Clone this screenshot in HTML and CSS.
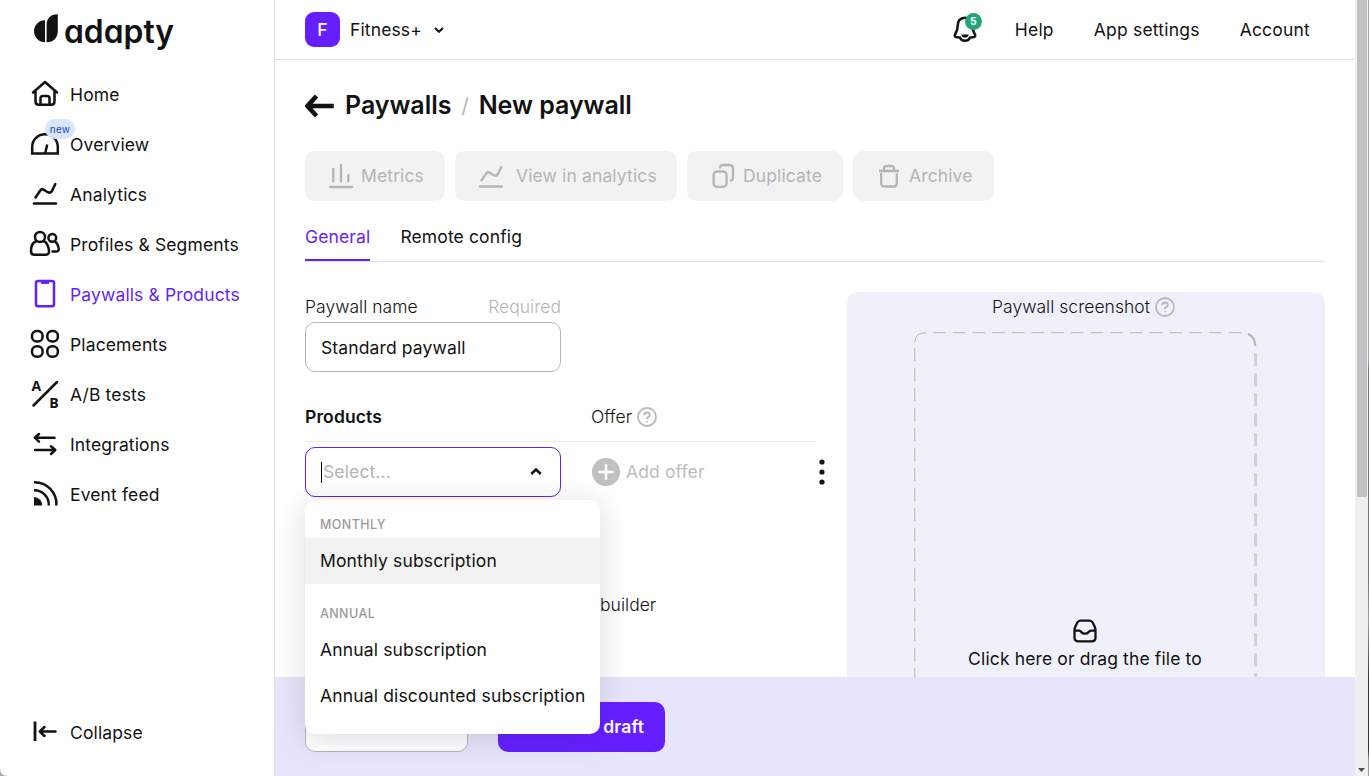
FILE: index.html
```html
<!DOCTYPE html>
<html lang="en">
<head>
<meta charset="utf-8">
<title>New paywall</title>
<link rel="stylesheet" href="styles.css">
</head>
<body>
<div class="app">
  <aside class="sidebar">
    <div class="logo">
      <svg width="146" height="44" viewBox="0 0 146 44">
        <path d="M12 6.2V28.2A11 11 0 0 1 12 6.2Z M13.6 11.5C13.6 4.5 17 .5 24.8 .3V16.5C24.8 24 20.6 28.2 13.6 28.2Z" fill="#121212"/>
        <text class="wordmark" x="31" y="28.7" textLength="110" lengthAdjust="spacingAndGlyphs">adapty</text>
      </svg>
    </div>
    <nav class="nav">
      <a class="nav-item"><svg class="ico" viewBox="0 0 30 30"><path d="M3 13.5 15 3 27 13.5M5.5 12V22.5Q5.5 25.8 8.8 25.8H21.2Q24.5 25.8 24.5 22.5V12M10.5 25.5V19.5Q10.5 17 13 17H17Q19.5 17 19.5 19.5V25.5"/></svg>Home</a>
      <a class="nav-item"><svg class="ico" viewBox="0 0 30 30"><path stroke-linecap="butt" stroke-linejoin="miter" d="M2.2 24.5V18A12.8 12.8 0 0 1 27.8 18V24.5ZM15.3 24 17.2 15.5"/></svg>Overview<span class="new">new</span></a>
      <a class="nav-item"><svg class="ico" viewBox="0 0 30 30"><path d="M5.5 18.5 10.5 11.2Q11.7 9.5 13.5 10.6L17.8 13.2Q20.3 14.5 22 12L25.3 5M4 24.5H26"/></svg>Analytics</a>
      <a class="nav-item"><svg class="ico" viewBox="0 0 30 30"><circle cx="10" cy="8" r="5"/><path d="M6.5 12C3 13.2 1 17.5 1 22 1 25 2.5 25.7 4 25.7H16C18 25.7 19.2 24.5 19 22 18.5 17.5 17 13.2 13.5 12M22.5 22.6H26.5C28.5 22.6 29 21 28.6 19 28 15.5 27 14 25.5 13"/><circle cx="22.3" cy="8.8" r="3.9"/></svg>Profiles &amp; Segments</a>
      <a class="nav-item active"><svg class="ico" viewBox="0 0 30 30"><rect x="6" y="2" width="18" height="25.3" rx="2"/><path stroke-width="3" stroke-linecap="butt" d="M11 3.4H19"/></svg>Paywalls &amp; Products</a>
      <a class="nav-item"><svg class="ico" viewBox="0 0 30 30"><rect x="2" y="2" width="10.6" height="10.6" rx="4.8"/><rect x="17.3" y="2" width="10.6" height="10.6" rx="4.8"/><rect x="2" y="17.2" width="10.6" height="10.6" rx="4.8"/><rect x="17.3" y="17.2" width="10.6" height="10.6" rx="4.8"/></svg>Placements</a>
      <a class="nav-item"><svg class="ico" viewBox="0 0 30 30"><path d="M3.5 26.5 27 3"/><text class="ab" x="1.5" y="12">A</text><text class="ab" x="19.3" y="28.5">B</text></svg>A/B tests</a>
      <a class="nav-item"><svg class="ico" viewBox="0 0 30 30"><path d="M24.5 8.7H5M9 5 4.8 8.7 9 12.6M5 21H25M21 17.2 25.3 21 21 25"/></svg>Integrations</a>
      <a class="nav-item"><svg class="ico" viewBox="0 0 30 30"><path stroke-linecap="butt" d="M4 3.2A22 22 0 0 1 26.4 26.5M4 11.2A14.5 14.5 0 0 1 18.8 26.5"/><path d="M4 18A8.6 8.6 0 0 1 12.3 26.5H4Z" fill="currentColor" stroke="none"/></svg>Event feed</a>
    </nav>
    <a class="nav-item collapse"><svg class="ico" viewBox="0 0 30 30"><path stroke-linecap="butt" stroke-width="2.8" d="M5 4.5V24"/><path d="M25.5 14.5H10M14.5 10 9.7 14.5 14.5 19"/></svg>Collapse</a>
    <svg class="corner" width="8" height="8"><path d="M0 0Q0 8 8 8H0Z" fill="#aaa"/></svg>
  </aside>

  <main class="main">
    <header class="top">
      <span class="badge">F</span><span class="appname">Fitness+</span>
      <svg class="chev" width="10" height="6" viewBox="0 0 10 6"><path d="M1 1 5 4.8 9 1"/></svg>
      <div class="top-right">
        <span class="bell">
          <svg width="24" height="28" viewBox="0 0 24 28"><path d="M12 1.8C7 1.8 4.8 5 4.8 9.2 4.8 13.5 3.8 15.2 2.2 18.2 1.2 20 1.7 21 3.7 21.2L7 21.6C8.5 25.8 15.5 25.8 17 21.6L20.3 21.2C22.3 21 22.8 20 21.8 18.2 20.2 15.2 19.2 13.5 19.2 9.2 19.2 5 17 1.8 12 1.8Z" fill="none" stroke="#121212" stroke-width="2.5"/><path d="M8.3 18.5H15.7Q15.5 21.6 12 21.6 8.5 21.6 8.3 18.5Z" fill="#121212"/></svg>
          <span class="count">5</span>
        </span>
        <a>Help</a><a>App settings</a><a>Account</a>
      </div>
    </header>

    <section class="content">
      <h1 class="title">
        <svg width="29" height="24" viewBox="0 0 29 24"><path d="M28.8 12H3M11.5 2 2.5 12 11.5 22" fill="none" stroke="#121212" stroke-width="4.6"/></svg>
        <span class="t1">Paywalls</span><span class="slash">/</span><span class="t2">New paywall</span>
      </h1>
      <div class="actions">
        <button class="act metrics"><svg width="24" height="26" viewBox="0 0 24 26"><path d="M1 24H23M4.3 6V18.5M12 2V18.5M19.3 12V18.5"/></svg>Metrics</button>
        <button class="act analytics"><svg width="26" height="26" viewBox="0 0 26 26"><path d="M3.5 17.5 8.5 10.2Q9.7 8.7 11.5 9.7L15.8 12.2Q18.3 13.5 20 11L23.3 4M2 23.5H24"/></svg>View in analytics</button>
        <button class="act duplicate"><svg width="24" height="26" viewBox="0 0 24 26"><rect x="2.6" y="8.5" width="13" height="15.3" rx="3.5"/><path d="M9 4.5Q9.5 2 12 2H18.5Q22 2 22 5.5V14Q22 17 19.8 17.5"/></svg>Duplicate</button>
        <button class="act archive"><svg width="20" height="26" viewBox="0 0 20 26"><path stroke-linecap="butt" d="M0 8H20M5 7.5V5.5Q5 3 7.5 3H12.5Q15 3 15 5.5V7.5"/><path d="M2.2 11V20.5Q2.2 23.5 5.2 23.5H14.8Q17.8 23.5 17.8 20.5V11"/></svg>Archive</button>
      </div>
      <div class="tabs"><a class="tab on">General</a><a class="tab">Remote config</a></div>

      <div class="cols">
        <div class="form">
          <div class="label-row"><span>Paywall name</span><span class="muted">Required</span></div>
          <div class="field name">Standard paywall</div>
          <div class="prod-head"><b>Products</b><span class="offer">Offer <svg class="q" width="20" height="20" viewBox="0 0 20 20"><circle cx="10" cy="10" r="9"/><path d="M7.2 8.2Q7.2 5.5 10 5.5T12.8 8Q12.8 9.3 11.2 10.1 10 10.7 10 12.2M10 14V15.3"/></svg></span></div>
          <div class="prod-row">
            <div class="field select"><span class="caret"></span>Select...
              <svg class="chev up" width="12" height="8" viewBox="0 0 12 8"><path d="M1.2 6 6 1.5 10.8 6"/></svg>
              <div class="menu">
                <div class="group">MONTHLY</div>
                <div class="opt hover">Monthly subscription</div>
                <div class="group second">ANNUAL</div>
                <div class="opt">Annual subscription</div>
                <div class="opt">Annual discounted subscription</div>
              </div>
            </div>
            <div class="add"><svg width="28" height="28" viewBox="0 0 28 28"><circle cx="14" cy="14" r="14" fill="#c0c0c0"/><path d="M14 7.3V20.7M7.3 14H20.7" stroke="#fff" stroke-width="2.5" stroke-linecap="round"/></svg>Add offer</div>
            <svg class="dots" width="6" height="26" viewBox="0 0 6 26"><circle cx="3" cy="3" r="2.6"/><circle cx="3" cy="13" r="2.6"/><circle cx="3" cy="23" r="2.6"/></svg>
          </div>
          <div class="builder">builder</div>
        </div>
        <div class="shot">
          <div class="shot-title">Paywall screenshot <svg class="q" width="20" height="20" viewBox="0 0 20 20"><circle cx="10" cy="10" r="9"/><path d="M7.2 8.2Q7.2 5.5 10 5.5T12.8 8Q12.8 9.3 11.2 10.1 10 10.7 10 12.2M10 14V15.3"/></svg></div>
          <div class="drop">
            <svg class="dash" width="344" height="345" viewBox="0 0 344 345"><g fill="none" stroke="#b5b5b5"><path d="M.8 10Q1 1 12 .7"/><path d="M19 .7H329" stroke-dasharray="12.7 7"/><path d="M.8 16V345" stroke-dasharray="13 7"/><path d="M334 2Q341 5 341.4 14" stroke-width="2"/><path d="M341.6 21.3V345" stroke="#cfcfd4" stroke-width="3" stroke-dasharray="13 7"/></g></svg>
            <div class="hint">
              <svg width="24" height="24" viewBox="0 0 24 24"><path d="M7.5 1.6H16.5Q18.7 1.6 19.7 3.6L21.8 8Q22.5 9.5 22.5 11.5V18.5Q22.5 22.4 18.5 22.4H5.5Q1.5 22.4 1.5 18.5V11.5Q1.5 9.5 2.2 8L4.3 3.6Q5.3 1.6 7.5 1.6ZM1.8 11.7H6Q7.4 11.7 8.3 13 9.5 14.7 12 14.7T15.7 13Q16.6 11.7 18 11.7H22.2" fill="none" stroke="#121212" stroke-width="2.3"/></svg>
              <span>Click here or drag the file to</span>
            </div>
          </div>
        </div>
      </div>
    </section>
    <footer class="foot"><button class="btn ghost"></button><button class="btn save">draft</button></footer>
  </main>
  <div class="scroll"><div class="thumb"></div><svg class="arrow" width="7" height="4"><path d="M0 0H7L3.5 4Z" fill="#505050"/></svg></div>
  <div class="edge"></div>
</div>
</body>
</html>
```
FILE: styles.css
```css
* { box-sizing: border-box; }
body { margin: 0; background: #fff; color: #121212; font: 400 17.5px/24px Inter, "Liberation Sans", sans-serif; letter-spacing: .13px; }
button { font: inherit; letter-spacing: inherit; border: 0; margin: 0; }
.app { display: grid; grid-template-columns: 275px 1080px 13px 1px; height: 776px; width: 1369px; overflow: hidden; }

.sidebar { position: relative; border-right: 1px solid #e2e2e2; display: flex; flex-direction: column; }
.logo { height: 69px; padding: 14px 0 0 33px; }
.logo svg { display: block; overflow: visible; }
.wordmark { font: 600 32px Inter, sans-serif; letter-spacing: 0; font-feature-settings: "cv11"; fill: #121212; }
.nav-item { position: relative; display: flex; align-items: center; height: 50px; padding: 2px 0 0 30px; gap: 10px; white-space: nowrap; }
.ico { width: 30px; height: 30px; margin-top: -2px; overflow: visible; fill: none; stroke: currentColor; stroke-width: 2.5; stroke-linecap: round; stroke-linejoin: round; }
.ab { font: 700 14px/20px "Open Sans", sans-serif; letter-spacing: 0; fill: currentColor; stroke: none; }
.active { color: #651fff; }
.new { position: absolute; left: 45px; top: 0; width: 30px; height: 20px; border-radius: 10px; background: #d6e6ff; color: #2346b8; font-size: 10px; line-height: 20px; text-align: center; letter-spacing: .3px; }
.collapse { margin-top: auto; margin-bottom: 19px; }
.corner { position: absolute; left: 0; bottom: 0; }

.main { display: flex; flex-direction: column; height: 776px; }
.top { flex: none; height: 60px; border-bottom: 1px solid #e2e2e2; display: flex; align-items: center; padding: 0 45px 0 30px; }
.badge { width: 35px; height: 35px; border-radius: 9px; background: #651fff; color: #fff; display: flex; align-items: center; justify-content: center; font-weight: 500; }
.appname { margin: 0 12px 0 10px; }
.chev { fill: none; stroke: #121212; stroke-width: 2; }
.top-right { margin-left: auto; display: flex; align-items: center; gap: 40px; letter-spacing: .2px; }
.bell { position: relative; display: flex; width: 24px; margin-right: -2px; }
.count { position: absolute; left: 12px; top: -3px; width: 17px; height: 17px; border-radius: 50%; background: #20a677; color: #fff; font-weight: 700; font-size: 10.5px; line-height: 17px; text-align: center; letter-spacing: 0; }

.content { flex: 1; min-height: 0; padding: 30px 30px 0; }
.title { display: flex; align-items: center; margin: 0 0 30px; height: 31px; font-size: 25px; line-height: 31px; font-weight: 600; letter-spacing: -.03px; }
.t1 { margin-left: 11px; }
.slash { margin: 2px 10px 0; font-size: 20px; font-weight: 400; color: #b5b5b5; }
.actions { display: flex; gap: 10px; }
.act { height: 50px; border-radius: 10px; background: #f2f2f2; color: #b5b5b5; display: flex; align-items: center; padding: 0 0 0 24px; gap: 8px; white-space: nowrap; }
.act svg { fill: none; stroke: #b5b5b5; stroke-width: 2.3; stroke-linecap: round; flex: none; }
.metrics { width: 140px; }
.analytics { width: 222px; padding-left: 23px; gap: 12px; }
.duplicate { width: 156px; }
.archive { width: 141px; padding-left: 26px; gap: 10px; }
.tabs { display: flex; gap: 30px; margin-top: 12px; height: 49px; border-bottom: 1px solid #e2e2e2; }
.tab { height: 48px; line-height: 48px; }
.on { color: #651fff; border-bottom: 2px solid #651fff; }

.cols { display: flex; justify-content: space-between; padding-top: 30px; height: 415px; }
.form { width: 522px; }
.label-row { display: flex; justify-content: space-between; width: 256px; height: 30px; line-height: 30px; }
.label-row, .offer, .shot-title, .builder { font-weight: 350; letter-spacing: .03px; }
.muted { color: #b5b5b5; }
.field { width: 256px; height: 50px; border: 1px solid #b5b5b5; border-radius: 10px; padding: 0 15px; display: flex; align-items: center; background: #fff; }
.name { padding-top: 2px; }
.prod-head { display: grid; grid-template-columns: 286px 1fr; align-items: center; width: 512px; height: 70px; padding-top: 20px; border-bottom: 1px solid #ececec; }
.prod-head b { font-weight: 600; }
.offer, .shot-title { display: flex; align-items: center; gap: 5px; }
.q { fill: none; stroke: #b8b8ba; stroke-width: 1.8; }
.prod-row { display: flex; align-items: center; margin-top: 5px; }
.select { position: relative; border-color: #651fff; color: #b5b5b5; }
.caret { width: 1px; height: 21px; background: #000; margin-right: 1px; }
.up { margin-left: auto; margin-right: 3px; stroke-width: 2.6; }
.menu { position: absolute; z-index: 5; left: -1px; top: 52px; width: 295px; height: 234px; border-radius: 10px; background: #fff; color: #121212; box-shadow: 0 4px 30px rgba(30, 30, 70, .16); overflow: hidden; white-space: nowrap; letter-spacing: .15px; }
.group { padding: 15px 15px 0; height: 38px; line-height: 20px; font-size: 12.5px; font-weight: 500; color: #999; letter-spacing: .4px; }
.opt { height: 46px; line-height: 46px; padding: 0 15px; }
.hover { background: #f2f2f2; }
.second { height: 36px; padding-top: 4px; margin-top: 16px; }
.second + .opt { margin-top: -9px; }
.add { display: flex; align-items: center; gap: 6px; margin-left: 31px; color: #bdbdbd; }
.dots { margin-left: auto; margin-right: 2px; fill: #121212; }
.builder { margin: 96px 0 0 295px; }

.shot { width: 478px; height: 385px; background: #f0f0fa; border-radius: 10px 10px 0 0; }
.shot-title { height: 30px; justify-content: center; padding-right: 5px; }
.drop { position: relative; width: 344px; height: 345px; margin: 10px 0 0 67px; }
.dash { position: absolute; left: 0; top: 0; }
.hint { display: flex; flex-direction: column; align-items: center; padding-top: 287px; gap: 4px; width: 342px; }
.foot { flex: none; height: 99px; background: #e7e5fb; display: flex; gap: 30px; padding: 25px 30px 24px; }
.btn { height: 50px; border-radius: 10px; }
.ghost { width: 163px; background: #fff; border: 1px solid #b5b5b5; }
.save { width: 167px; background: #651fff; color: #fff; font-weight: 600; text-align: right; padding: 0 21px 0 0; }

.scroll { background: #f0f0f0; display: flex; flex-direction: column; align-items: center; justify-content: space-between; padding-bottom: 4px; }
.thumb { width: 10px; height: 497px; background: #c1c1c1; margin-left: 1px; }
.edge { background: linear-gradient(#a3a3a8 0 360px, #777 370px 580px, #a0a0a0 620px, #333 680px 750px, #999 760px); }
```
